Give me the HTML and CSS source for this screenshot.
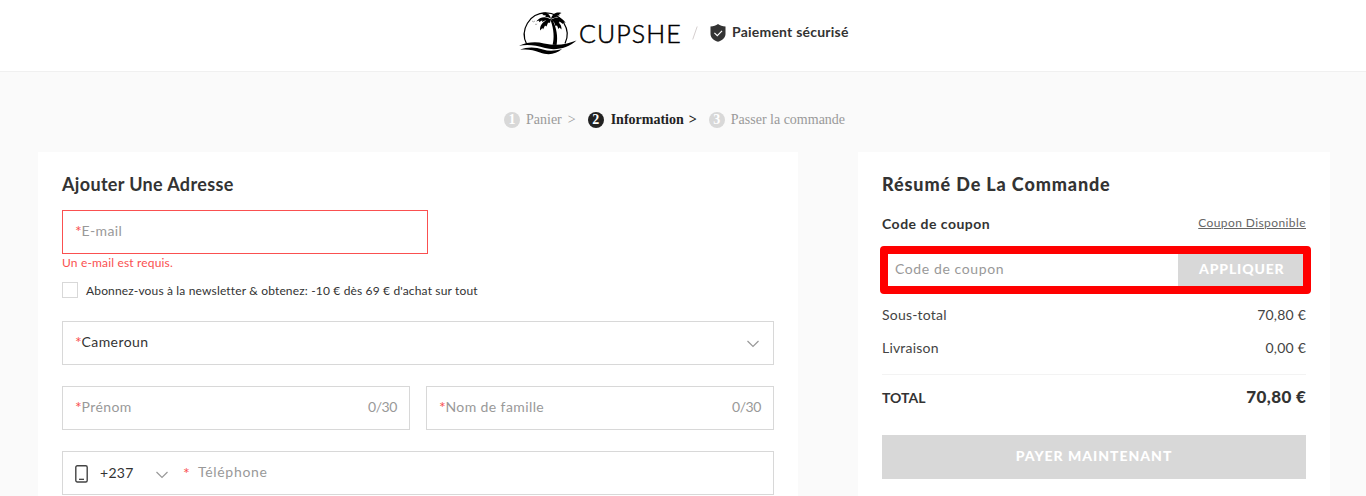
FILE: index.html
```html
<!DOCTYPE html>
<html lang="fr">
<head>
<meta charset="utf-8">
<title>Cupshe – Paiement sécurisé</title>
<link rel="stylesheet" href="styles.css">
</head>
<body>
<header class="header">
  <svg class="palm" width="60" height="46" viewBox="0 0 60 46">
    <path d="M8.6 34A21.4 21.4 0 1 1 47 33.6" fill="none" stroke="#000" stroke-width="1.2"/>
    <path d="M1 35.8C9 32.3 17 31.4 26 33.4C38 35.9 47 35 58.5 30.5C50 38 38 41 27 38C18 35.4 10 34.3 1 35.8Z"/>
    <path d="M2 39.8C9 36.8 17 36.7 25 39.5C31 41.5 37 41 44 39.1C38 44.5 30 45.6 22 42.6C15 39.8 9 38.7 2 39.8Z"/>
    <path d="M34.6 34.8C36.3 28 36 20 32.7 10.5L34.3 9.8C38.8 18 40 27 38.6 34.9Z"/>
    <path d="M33 10C29 5.8 22 6.2 18.2 11.5L21.2 10.5L21 12.3L24.3 10.2L24 12L27.5 10.2L28 11.5Z"/>
    <path d="M33 9C32 3.5 28 1.2 22.5 3L25.5 4L24.2 5L28 5.5L27.2 6.8L31 7.5Z"/>
    <path d="M33 9C34 4 38 1.5 43.5 3L41 4.2L42 5.2L38.5 5.8L39 7L35.5 8Z"/>
    <path d="M33 10C38 5.5 44.5 7 47.7 13L45 11.8L45 14L41.5 11.5L41 13.2L38 11Z"/>
    <path d="M33 9C27 9.5 21.5 14 22 20.5L24.5 18L25 19.5L27 15.5L28.5 16.5L30 12.8L32 12.8Z"/>
    <path d="M33 9C39 9.5 44 14 43.5 19.5L41.5 17.5L40.5 19L39 15.5L37.5 16L36.3 12.7Z"/>
    <path d="M14 11l1.5 .8 1.5-.8M17 14l1 .6 1.2-.7" fill="none" stroke="#777" stroke-width=".6"/>
  </svg>
  <span class="wordmark">CUPSHE</span>
  <svg class="slash" width="6" height="14" viewBox="0 0 6 14"><path d="M.7 13.5L5.2 .5" stroke="#d5cfcf" stroke-width="1"/></svg>
  <svg class="shield" width="16" height="18" viewBox="0 0 16 18"><path d="M8 0C10 1.5 12.5 2.2 15.5 2.4V10C15.5 13.8 12.3 16.2 8 17.8C3.7 16.2.5 13.8.5 10V2.4C3.5 2.2 6 1.5 8 0Z" fill="#333"/><path d="M4.4 8.9L7.3 11.6L12 6.9" fill="none" stroke="#fff" stroke-width="1.2"/></svg>
  <span class="secure">Paiement sécurisé</span>
</header>
<nav class="steps">
  <span class="step"><b class="dot">1</b><span>Panier</span><span class="gt">&gt;</span></span>
  <span class="step active"><b class="dot">2</b><span>Information</span><span class="gt">&gt;</span></span>
  <span class="step"><b class="dot">3</b><span>Passer la commande</span></span>
</nav>
<main class="columns">
  <section class="card address">
    <h2 class="title t-address">Ajouter Une Adresse</h2>
    <div class="field email"><i>*</i><span class="ph">E-mail</span></div>
    <p class="error">Un e-mail est requis.</p>
    <label class="newsletter"><span class="box"></span><span class="news-text">Abonnez-vous à la newsletter &amp; obtenez: -10 € dès 69 € d'achat sur tout</span></label>
    <div class="field country"><i>*</i><span class="value">Cameroun</span>
      <svg class="chevron" width="12" height="8" viewBox="0 0 12 8"><path d="M.5 1L6 6.5L11.5 1" fill="none" stroke="#999" stroke-width="1.2"/></svg></div>
    <div class="names">
      <div class="field"><i>*</i><span class="ph">Prénom</span><span class="count">0/30</span></div>
      <div class="field"><i>*</i><span class="ph">Nom de famille</span><span class="count">0/30</span></div>
    </div>
    <div class="field phone">
      <svg class="mobile" width="13" height="18" viewBox="0 0 13 18"><rect x=".8" y=".8" width="11.4" height="16.2" rx="1.5" fill="none" stroke="#444" stroke-width="1.4"/><path d="M4 14.3H9" stroke="#333" stroke-width="1.2"/></svg>
      <span class="code">+237</span>
      <svg class="chev" width="12" height="8" viewBox="0 0 12 8"><path d="M.5 1L6 6.5L11.5 1" fill="none" stroke="#999" stroke-width="1.2"/></svg>
      <i>*</i><span class="ph tel">Téléphone</span>
    </div>
  </section>
  <aside class="card summary">
    <h2 class="title t-summary">Résumé De La Commande</h2>
    <div class="coupon-head"><strong>Code de coupon</strong><a>Coupon Disponible</a></div>
    <div class="coupon"><span class="coupon-input">Code de coupon</span><span class="apply">APPLIQUER</span></div>
    <div class="row"><span>Sous-total</span><span class="amt">70,80 €</span></div>
    <div class="row"><span>Livraison</span><span class="amt">0,00 €</span></div>
    <div class="total"><span class="total-label">TOTAL</span><span class="total-amt">70,80 €</span></div>
    <div class="pay"><span>PAYER MAINTENANT</span></div>
  </aside>
</main>
</body>
</html>
```
FILE: styles.css
```css
* { box-sizing: border-box; }
body { margin: 0; height: 496px; overflow: hidden; background: #fafafa; color: #333; font: 14px/20px Lato, "Open Sans", sans-serif; }
svg { display: block; flex: none; }
span, a, strong { white-space: nowrap; }

.header { display: flex; align-items: flex-start; height: 72px; padding-left: 518px; background: #fff; border-bottom: 1px solid #f0f0f0; }
.palm { margin-top: 10px; }
.wordmark { width: 114px; margin-top: 18px; padding-left: 1px; font-family: "Lato Light", Lato, sans-serif; font-size: 25px; font-weight: 300; line-height: 30px; letter-spacing: 1.1px; color: #000; -webkit-text-stroke: .5px #000; }
.slash { margin-top: 26px; }
.shield { margin: 24px 0 0 12px; }
.secure { margin: 22px 0 0 6px; font-weight: 700; letter-spacing: .22px; }

.steps { display: flex; height: 80px; padding: 38px 0 0 504px; font: 14px/20px "Liberation Serif", serif; color: #999; }
.step { display: flex; align-items: center; height: 20px; margin-right: 12px; }
.dot { width: 16px; height: 16px; margin-right: 6px; border-radius: 50%; background: #d8d8d8; color: #fff; text-align: center; line-height: 16px; }
.gt { margin-left: 6px; }
.active { color: #222; font-weight: 700; }
.active .dot { margin-right: 7px; background: #222; }
.active .gt { margin-left: 5px; }

.columns { display: flex; gap: 60px; padding-left: 38px; }
.card { height: 344px; padding: 20px 24px 0; background: #fff; overflow: hidden; }
.address { width: 760px; }
.summary { width: 472px; }
.title { margin: 0; font-size: 18px; line-height: 24px; font-weight: 700; white-space: nowrap; }
.t-address { letter-spacing: .34px; }
.t-summary { font-weight: 900; letter-spacing: .88px; }
.field { display: flex; align-items: center; height: 44px; padding: 0 12px 2px; border: 1px solid #d8d8d8; background: #fff; }
.field i { width: 6.5px; color: #fa5050; font-size: 16px; font-style: normal; }
.ph { color: #999; letter-spacing: .4px; }
.value { letter-spacing: .42px; }
.count { margin-left: auto; color: #999; letter-spacing: -.4px; }
.email { width: 366px; margin-top: 14px; border-color: #fa5050; }
.error { margin: 0; color: #fa5050; font-size: 12px; line-height: 18px; letter-spacing: .16px; }
.newsletter { display: flex; align-items: center; gap: 8px; height: 18px; margin-top: 9px; font-size: 12px; letter-spacing: .16px; }
.news-text { padding-top: 2px; }
.box { width: 16px; height: 16px; border: 1px solid #d8d8d8; }
.country { margin-top: 22px; }
.chevron { margin: 3px 2px 0 auto; }
.names { display: grid; grid-template-columns: 1fr 1fr; gap: 16px; margin: 21px 0; }
.phone { padding-bottom: 0; }
.mobile { margin-top: 1px; }
.code { width: 45px; margin-left: 12px; letter-spacing: .3px; }
.chev { margin: 4px 15px 0 11px; }
.tel { margin: -2px 0 0 8.5px; letter-spacing: .68px; }

.coupon-head { display: flex; justify-content: space-between; height: 20px; margin-top: 18px; letter-spacing: .5px; }
.coupon-head a { font-size: 12px; line-height: 18px; letter-spacing: .41px; color: #666; text-decoration: underline; }
.coupon { display: flex; width: 431px; height: 48px; margin: 12px 0 0 -2px; border: 8px solid #f00; border-radius: 4px; }
.coupon-input { flex: 1; padding: 5px 7px; color: #999; letter-spacing: .6px; }
.apply { width: 125px; padding: 5px 0 0 21px; background: #d8d8d8; color: #fff; font-weight: 900; letter-spacing: .85px; }
.row { display: flex; justify-content: space-between; height: 33px; padding-top: 11px; color: #444; letter-spacing: .2px; }
.total { display: flex; justify-content: space-between; height: 61px; margin-top: 14px; padding-top: 13px; border-top: 1px solid #f3f3f3; }
.total-label { font-weight: 700; }
.total-amt { margin: -1px -.4px 0 0; font-size: 17px; font-weight: 900; letter-spacing: .4px; }
.pay { height: 44px; padding-top: 11px; background: #d8d8d8; color: #fff; text-align: center; font-weight: 900; letter-spacing: .97px; }
```
